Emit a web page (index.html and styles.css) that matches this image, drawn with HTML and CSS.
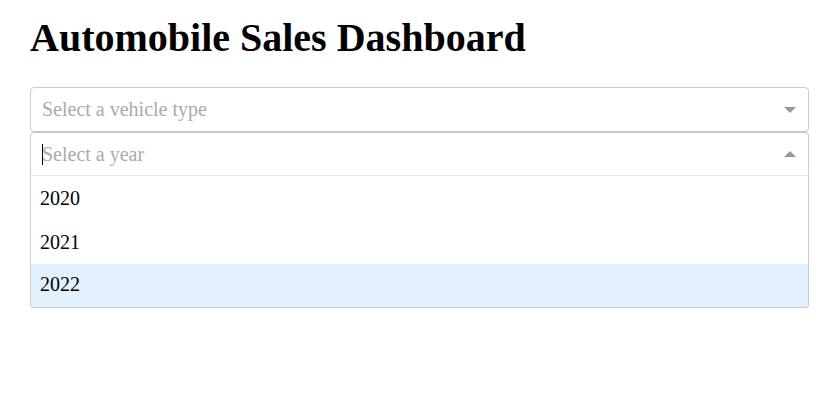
FILE: index.html
```html
<!DOCTYPE html>
<html>
<head>
<meta charset="utf-8">
<link rel="stylesheet" href="styles.css">
</head>
<body>
<div class="page">
  <h1 class="title">Automobile Sales Dashboard</h1>
  <div class="select">
    <div class="control">
      <span class="placeholder">Select a vehicle type</span>
      <span class="arrow down"></span>
    </div>
  </div>
  <div class="select open">
    <div class="control">
      <span class="caret"></span><span class="placeholder">Select a year</span>
      <span class="arrow up"></span>
    </div>
    <div class="menu">
      <div class="option">2020</div>
      <div class="option">2021</div>
      <div class="option focused">2022</div>
    </div>
  </div>
</div>
</body>
</html>
```
FILE: styles.css
```css
html, body {
  margin: 0;
  padding: 0;
  background: #fff;
}
.page {
  padding: 15px 31px 0 30px;
  font-family: "Liberation Serif", "Times New Roman", serif;
  color: #000;
}
.title {
  font-size: 40px;
  font-weight: bold;
  margin: 0 0 26px 0;
  line-height: 46px;
}
.select {
  position: relative;
}
.control {
  height: 43px;
  border: 1px solid #ccc;
  border-radius: 4px;
  display: flex;
  align-items: center;
  padding: 0 12px 0 11px;
  font-size: 20px;
  background: #fff;
}
.open .control {
  height: 42px;
  border-color: #c4c4c4 #ccc #e6e6e6;
  border-radius: 4px 4px 0 0;
}
.placeholder {
  color: #aaa;
  flex: 1;
}
.caret {
  width: 1px;
  height: 21px;
  background: #000;
  margin-right: -1px;
}
.arrow {
  width: 0;
  height: 0;
  border-left: 6px solid transparent;
  border-right: 6px solid transparent;
}
.arrow.down {
  border-top: 6px solid #999;
}
.arrow.up {
  border-bottom: 6px solid #999;
}
.menu {
  border: 1px solid #ccc;
  border-top: none;
  border-radius: 0 0 4px 4px;
  box-shadow: 0 1px 0 rgba(0, 0, 0, 0.06);
  background: #fff;
  overflow: hidden;
}
.option {
  height: 44px;
  display: flex;
  align-items: center;
  padding: 0 10px 0 9px;
  font-size: 20px;
  color: #000;
}
.option.focused {
  background: #e3f1ff;
}
.option:last-child {
  height: 41px;
  padding-bottom: 2px;
  box-sizing: border-box;
  height: 43px;
}
```
